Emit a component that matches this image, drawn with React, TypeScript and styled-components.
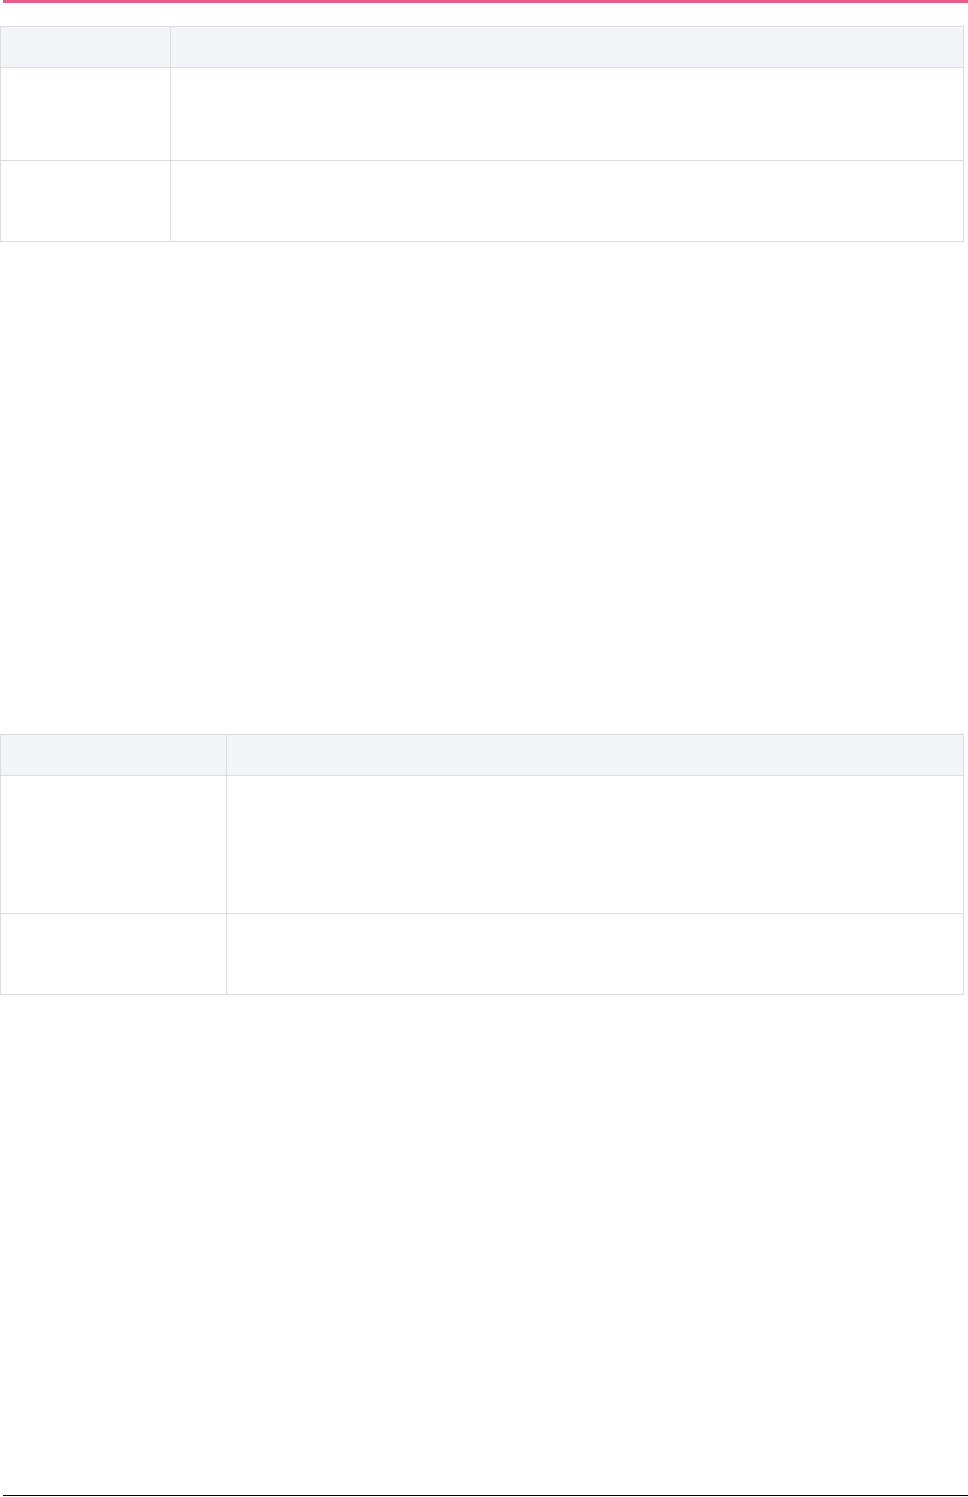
import React from 'react';
import styled, { createGlobalStyle } from 'styled-components';

const GlobalStyle = createGlobalStyle`
  html, body {
    margin: 0;
    padding: 0;
    background: #ffffff;
    font-family: 'Liberation Sans', Arial, sans-serif;
  }
`;

const Page = styled.div`
  width: 968px;
  min-height: 1497px;
  display: flex;
  flex-direction: column;
`;

const AccentBar = styled.div`
  height: 3px;
  margin-left: 3px;
  background: #e95b8b;
`;

const Grid = styled.div<{ $labelWidth: number; $gap: number }>`
  display: grid;
  grid-template-columns: ${({ $labelWidth }) => $labelWidth}px 1fr;
  width: 964px;
  margin-top: ${({ $gap }) => $gap}px;
  border-top: 1px solid #dcdcdf;
  border-left: 1px solid #dcdcdf;
  box-sizing: border-box;
`;

const Cell = styled.div<{ $head?: boolean; $height: number }>`
  box-sizing: border-box;
  height: ${({ $height }) => $height}px;
  border-right: 1px solid #dcdcdf;
  border-bottom: 1px solid #dcdcdf;
  background: ${({ $head }) => ($head ? '#f4f5f9' : '#ffffff')};
  padding: 10px 14px;
  font-size: 14px;
  color: #333;
`;

const FooterRule = styled.div`
  height: 1px;
  margin-left: 3px;
  margin-top: auto;
  margin-bottom: 1px;
  background: #000000;
`;

interface TableProps {
  labelWidth: number;
  gap: number;
  rows: number[];
}

function InfoTable ({ gap, labelWidth, rows }: TableProps): React.ReactElement {
  return (
    <Grid $gap={gap} $labelWidth={labelWidth}>
      <Cell $head $height={41} />
      <Cell $head $height={41} />
      {rows.map((h, i) => (
        <React.Fragment key={i}>
          <Cell $height={h} />
          <Cell $height={h} />
        </React.Fragment>
      ))}
    </Grid>
  );
}

export default function App (): React.ReactElement {
  return (
    <Page>
      <GlobalStyle />
      <AccentBar />
      <InfoTable gap={23} labelWidth={170} rows={[93, 81]} />
      <InfoTable gap={492} labelWidth={226} rows={[138, 81]} />
      <FooterRule />
    </Page>
  );
}
